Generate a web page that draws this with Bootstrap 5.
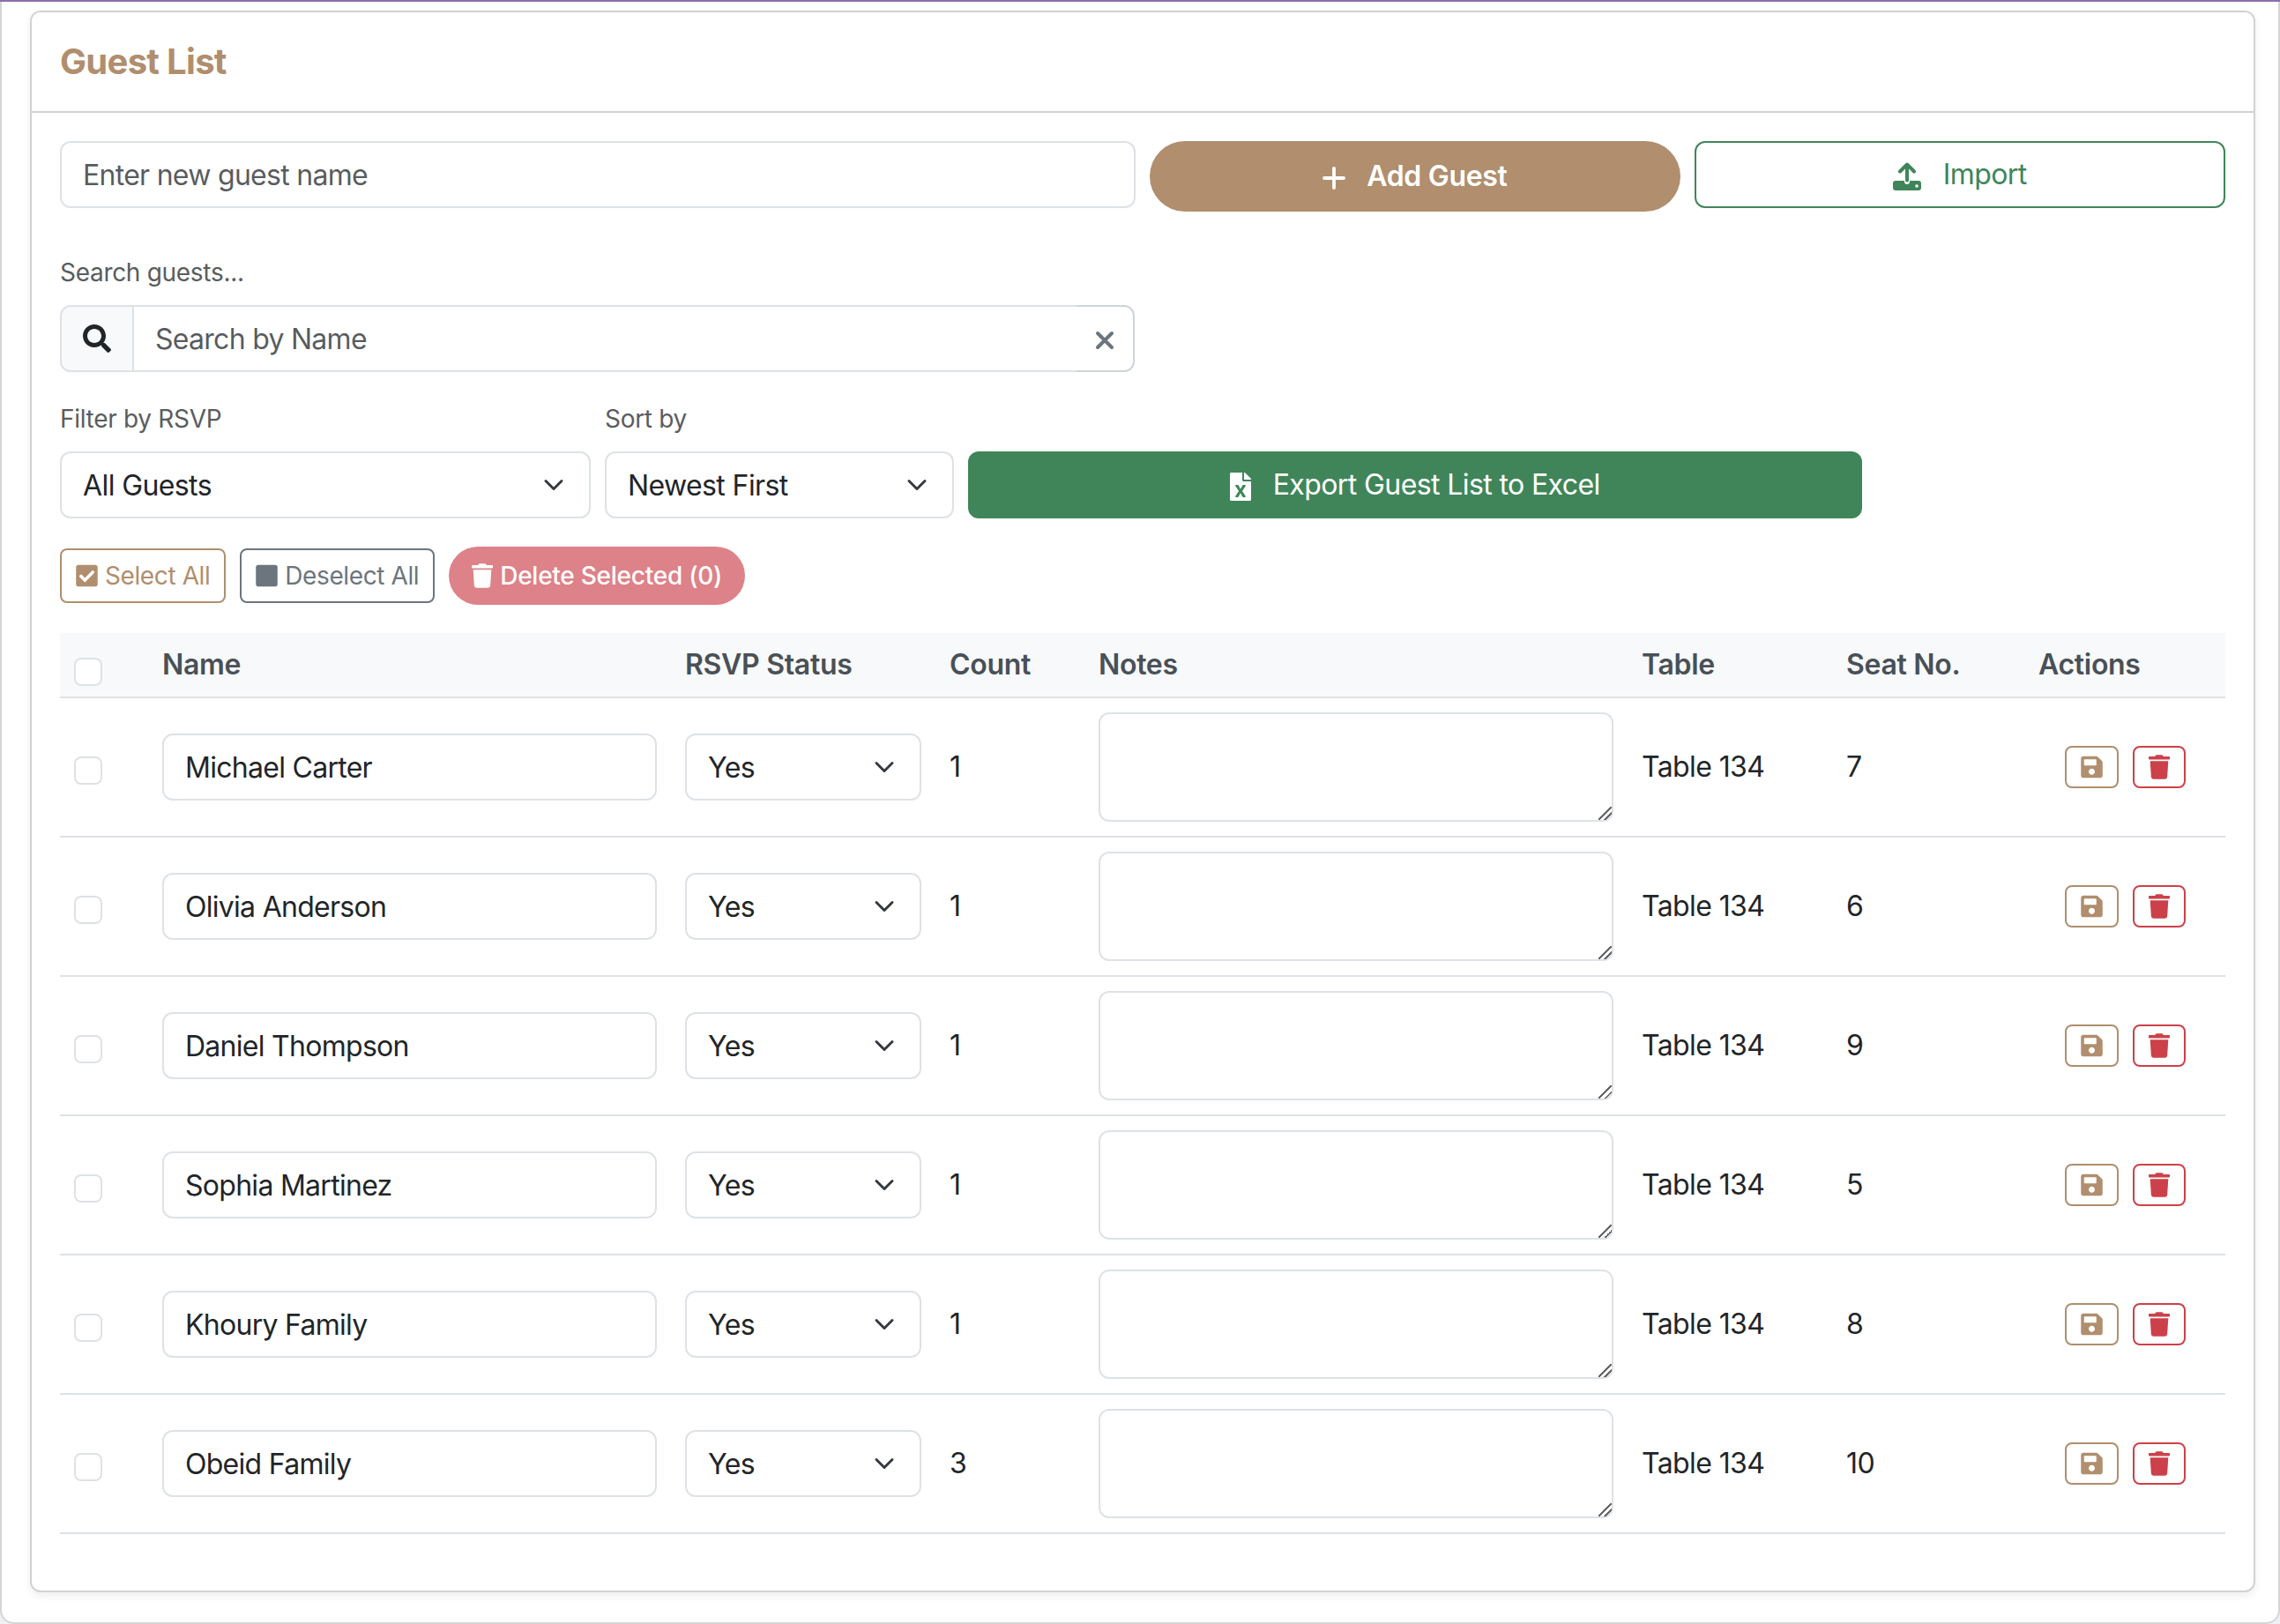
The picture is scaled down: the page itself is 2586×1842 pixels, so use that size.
<!DOCTYPE html>
<html lang="en">
  <head>
    <meta charset="UTF-8" />
    <meta name="viewport" content="width=device-width, initial-scale=1" />
    <title>Guest List</title>

    <link
      href="https://cdn.jsdelivr.net/npm/bootstrap@5.3.0/dist/css/bootstrap.min.css"
      rel="stylesheet"
    />
    <style>
      /* screenshot is a 2x page, so double the rem base and the hairlines */
      html {
        font-size: 32px;
      }

      :root {
        --bs-border-width: 2px;
        --bs-body-font-family: Inter, "Liberation Sans", sans-serif;
        --tan: #b08e6e;
        --green: #40855a;
        --red: #cc4149;
      }

      body {
        background: #eef0f4;
        border-top: 2px solid #8a6fb0;
        letter-spacing: -0.6px;
      }

      select,
      button {
        letter-spacing: -0.6px;
      }

      input,
      textarea {
        letter-spacing: -0.72px;
      }

      .form-control,
      .form-select {
        padding-top: 13px;
        padding-bottom: 11px;
      }

      .page-shell {
        background: #fff;
        border: 2px solid #d5d5d8;
        border-top: 0;
        border-radius: 0 0 16px 16px;
        padding: 10px 26px 34px 32px;
      }

      .title-tan {
        color: var(--tan);
        letter-spacing: -0.7px;
      }

      .form-select {
        background-size: 32px 24px;
      }

      .soft-label {
        font-size: 28px;
        color: #595c5f;
        letter-spacing: -0.3px;
      }

      .btn-add {
        background: var(--tan);
        color: #fff;
        font-weight: 600;
        padding-block: 14px;
        letter-spacing: -0.3px;
      }

      .btn-add:hover {
        background: #9c7c5e;
        color: #fff;
      }

      .btn-import {
        border-color: var(--green);
        color: var(--green);
      }

      .btn-export {
        background: var(--green);
        border-color: var(--green);
        color: #fff;
      }

      .btn-select {
        border-color: var(--tan);
        color: var(--tan);
      }

      .btn-sm {
        letter-spacing: -0.4px;
      }

      .btn-drop {
        background: #dd8288;
        color: #fff;
        font-size: 28px;
        font-weight: 500;
        padding: 10px 24px;
        letter-spacing: -0.25px;
      }

      .btn-clear {
        border: 2px solid #ced4da;
        border-left: 0;
        color: #6c757d;
        padding-inline: 20px;
      }

      .search-input {
        border-right: 0;
      }

      .search-box {
        width: 1219px;
      }

      .guest-table {
        table-layout: fixed;
      }

      .guest-table th {
        color: #495057;
        font-weight: 600;
        padding-block: 12px;
        letter-spacing: -0.3px;
      }

      .guest-table th:nth-child(1) { width: 100px; }
      .guest-table th:nth-child(2) { width: 593px; }
      .guest-table th:nth-child(3) { width: 300px; }
      .guest-table th:nth-child(4) { width: 169px; }
      .guest-table th:nth-child(5) { width: 616px; }
      .guest-table th:nth-child(6) { width: 232px; }
      .guest-table th:nth-child(7) { width: 218px; }

      .guest-table .form-check-input {
        display: block;
        margin: 7px 0 0;
      }

      .guest-table textarea {
        display: block;
      }

      .guest-table textarea::-webkit-resizer {
        background: linear-gradient(135deg, transparent 46%, #666 46%, #666 54%, transparent 54%, transparent 70%, #666 70%, #666 78%, transparent 78%);
      }

      .icon-btn {
        padding: 8px 16px;
        line-height: 1;
        display: inline-flex;
        align-items: center;
      }

      .btn-save {
        border-color: var(--tan);
        color: var(--tan);
      }

      .btn-bin {
        border-color: var(--red);
        color: var(--red);
      }

      .ico {
        fill: currentColor;
        flex: none;
      }
    </style>
  </head>

  <body>
    <svg class="d-none">
      <symbol id="i-trash" viewBox="0 0 448 512"><path d="M432 32H312l-9.4-18.7A24 24 0 0 0 281.1 0H166.8a23.72 23.72 0 0 0-21.4 13.3L136 32H16A16 16 0 0 0 0 48v32a16 16 0 0 0 16 16h416a16 16 0 0 0 16-16V48a16 16 0 0 0-16-16zM53.2 467a48 48 0 0 0 47.9 45h245.8a48 48 0 0 0 47.9-45L416 128H32z"/></symbol>
      <symbol id="i-save" viewBox="0 0 448 512"><path d="M433.941 129.941l-83.882-83.882A48 48 0 0 0 316.118 32H48C21.49 32 0 53.49 0 80v352c0 26.51 21.49 48 48 48h352c26.51 0 48-21.49 48-48V163.882a48 48 0 0 0-14.059-33.941zM224 416c-35.346 0-64-28.654-64-64 0-35.346 28.654-64 64-64s64 28.654 64 64c0 35.346-28.654 64-64 64zm96-304.52V212c0 6.627-5.373 12-12 12H76c-6.627 0-12-5.373-12-12V108c0-6.627 5.373-12 12-12h228.52c3.183 0 6.235 1.264 8.485 3.515l3.48 3.48A11.996 11.996 0 0 1 320 111.48z"/></symbol>
    </svg>

    <div class="page-shell">
      <div class="card shadow-sm">
        <div class="card-header bg-white px-3 py-3">
          <h5 class="mb-0 fw-bold title-tan">Guest List</h5>
        </div>

        <div class="card-body p-3">
          <!-- Add guest -->
          <div class="row g-2 mb-4 align-items-start">
            <div class="col-6">
              <input type="text" class="form-control" placeholder="Enter new guest name" />
            </div>
            <div class="col-3">
              <button class="btn btn-add rounded-pill w-100" type="button">
                <svg class="me-2" width="26" height="26" viewBox="0 0 26 26" fill="none" stroke="currentColor" stroke-width="3.8" stroke-linecap="round"><path d="M13 2v22M2 13h22"/></svg>
                Add Guest
              </button>
            </div>
            <div class="col-3">
              <button class="btn btn-import w-100" type="button">
                <svg class="ico me-2" width="32" height="32" viewBox="0 0 32 32"><path d="M0 24a3 3 0 0 1 3-3h10v1a3 3 0 0 0 6 0v-1h10a3 3 0 0 1 3 3v5a3 3 0 0 1-3 3H3a3 3 0 0 1-3-3z"/><path d="M16 20.5V3M8 10.5l8-8 8 8" fill="none" stroke="currentColor" stroke-width="4" stroke-linecap="round" stroke-linejoin="round"/><circle cx="27" cy="27" r="1.8" fill="#fff"/></svg>
                Import
              </button>
            </div>
          </div>

          <!-- Search -->
          <div class="mb-3 search-box">
            <label class="form-label d-block soft-label">Search guests...</label>
            <div class="input-group">
              <span class="input-group-text">
                <svg class="ico" width="32" height="32" viewBox="0 0 512 512"><path d="M505 442.7L405.3 343c-4.5-4.5-10.6-7-17-7H372c27.6-35.3 44-79.7 44-128C416 93.1 322.9 0 208 0S0 93.1 0 208s93.1 208 208 208c48.3 0 92.7-16.4 128-44v16.3c0 6.4 2.5 12.5 7 17l99.7 99.7c9.4 9.4 24.6 9.4 33.9 0l28.3-28.3c9.4-9.4 9.4-24.6.1-34zM208 336c-70.7 0-128-57.2-128-128 0-70.7 57.2-128 128-128 70.7 0 128 57.2 128 128 0 70.7-57.2 128-128 128z"/></svg>
              </span>
              <input type="text" class="form-control search-input" placeholder="Search by Name" />
              <button class="btn btn-clear" type="button">
                <svg width="24" height="24" viewBox="0 0 24 24" fill="none" stroke="currentColor" stroke-width="4" stroke-linecap="round"><path d="M4 4l16 16M20 4L4 20"/></svg>
              </button>
            </div>
          </div>

          <!-- Filters -->
          <div class="row g-2 mb-3 align-items-end">
            <div class="col-3">
              <label class="form-label d-block soft-label">Filter by RSVP</label>
              <select class="form-select">
                <option>All Guests</option>
                <option>Yes</option>
                <option>No</option>
              </select>
            </div>
            <div class="col-2">
              <label class="form-label d-block soft-label">Sort by</label>
              <select class="form-select">
                <option>Newest First</option>
                <option>Oldest First</option>
              </select>
            </div>
            <div class="col-5">
              <button class="btn btn-export w-100" type="button">
                <svg class="ico me-2" width="24" height="32" viewBox="0 0 384 512"><path d="M224 136V0H24C10.7 0 0 10.7 0 24v464c0 13.3 10.7 24 24 24h336c13.3 0 24-10.7 24-24V160H248c-13.2 0-24-10.8-24-24zm60.1 106.5L224 336l60.1 93.5c5.1 8-.6 18.5-10.1 18.5h-34.9c-4.4 0-8.5-2.4-10.6-6.3C208.9 405.5 192 373 192 373c-6.4 14.8-10 20-36.6 68.8-2.1 3.9-6.1 6.3-10.5 6.3H110c-9.5 0-15.2-10.5-10.1-18.5l60.3-93.5-60.3-93.5c-5.2-8 .6-18.5 10.1-18.5h34.8c4.4 0 8.5 2.4 10.6 6.3 26.1 48.8 20 33.6 36.6 68.5 0 0 6.1-11.7 36.6-68.5 2.1-3.9 6.2-6.3 10.6-6.3H274c9.5-.1 15.2 10.4 10.1 18.4zM384 121.9v6.1H256V0h6.1c6.4 0 12.5 2.5 17 7l97.9 98c4.5 4.5 7 10.6 7 16.9z"/></svg>
                Export Guest List to Excel
              </button>
            </div>
          </div>

          <!-- Bulk actions -->
          <div class="d-flex align-items-center gap-2 mb-3">
            <button class="btn btn-sm btn-select d-inline-flex align-items-center" type="button">
              <svg class="ico me-1" width="25" height="28" viewBox="0 0 448 512"><path d="M400 480H48c-26.51 0-48-21.49-48-48V80c0-26.51 21.49-48 48-48h352c26.51 0 48 21.49 48 48v352c0 26.51-21.49 48-48 48zm-204.686-98.059l184-184c6.248-6.248 6.248-16.379 0-22.627l-22.627-22.627c-6.248-6.248-16.379-6.249-22.628 0L184 302.745l-69.059-69.059c-6.248-6.248-16.379-6.248-22.628 0L69.686 256.313c-6.248 6.248-6.248 16.379 0 22.627l104 104c6.249 6.25 16.379 6.25 22.628.001z"/></svg>Select All
            </button>
            <button class="btn btn-sm btn-outline-secondary d-inline-flex align-items-center" type="button">
              <svg class="ico me-1" width="25" height="28" viewBox="0 0 448 512"><path d="M400 32H48C21.5 32 0 53.5 0 80v352c0 26.5 21.5 48 48 48h352c26.5 0 48-21.5 48-48V80c0-26.5-21.5-48-48-48z"/></svg>Deselect All
            </button>
            <button class="btn btn-drop rounded-pill d-inline-flex align-items-center" type="button">
              <svg class="ico me-1" width="24" height="28"><use href="#i-trash"/></svg>Delete Selected (0)
            </button>
          </div>

          <!-- Guests -->
          <table class="table align-middle guest-table">
            <thead class="table-light">
              <tr>
                <th><input class="form-check-input" type="checkbox" /></th>
                <th>Name</th>
                <th>RSVP Status</th>
                <th>Count</th>
                <th>Notes</th>
                <th>Table</th>
                <th>Seat No.</th>
                <th>Actions</th>
              </tr>
            </thead>
            <tbody id="guestRows"></tbody>
          </table>
        </div>
      </div>
    </div>

    <script>
      const guests = [
        ["Michael Carter", 1, 7],
        ["Olivia Anderson", 1, 6],
        ["Daniel Thompson", 1, 9],
        ["Sophia Martinez", 1, 5],
        ["Khoury Family", 1, 8],
        ["Obeid Family", 3, 10],
      ];

      document.getElementById("guestRows").innerHTML = guests
        .map(
          ([name, count, seat]) => `
          <tr>
            <td><input class="form-check-input" type="checkbox" /></td>
            <td><input type="text" class="form-control" value="${name}" /></td>
            <td>
              <select class="form-select">
                <option>Yes</option>
                <option>No</option>
              </select>
            </td>
            <td>${count}</td>
            <td><textarea class="form-control" rows="2"></textarea></td>
            <td>Table 134</td>
            <td>${seat}</td>
            <td>
              <div class="d-flex justify-content-center gap-2">
                <button class="btn btn-sm btn-save icon-btn" type="button"><svg class="ico" width="25" height="28"><use href="#i-save"/></svg></button>
                <button class="btn btn-sm btn-bin icon-btn" type="button"><svg class="ico" width="24" height="28"><use href="#i-trash"/></svg></button>
              </div>
            </td>
          </tr>`
        )
        .join("");
    </script>

    <script src="https://cdn.jsdelivr.net/npm/bootstrap@5.3.0/dist/js/bootstrap.bundle.min.js"></script>
  </body>
</html>
